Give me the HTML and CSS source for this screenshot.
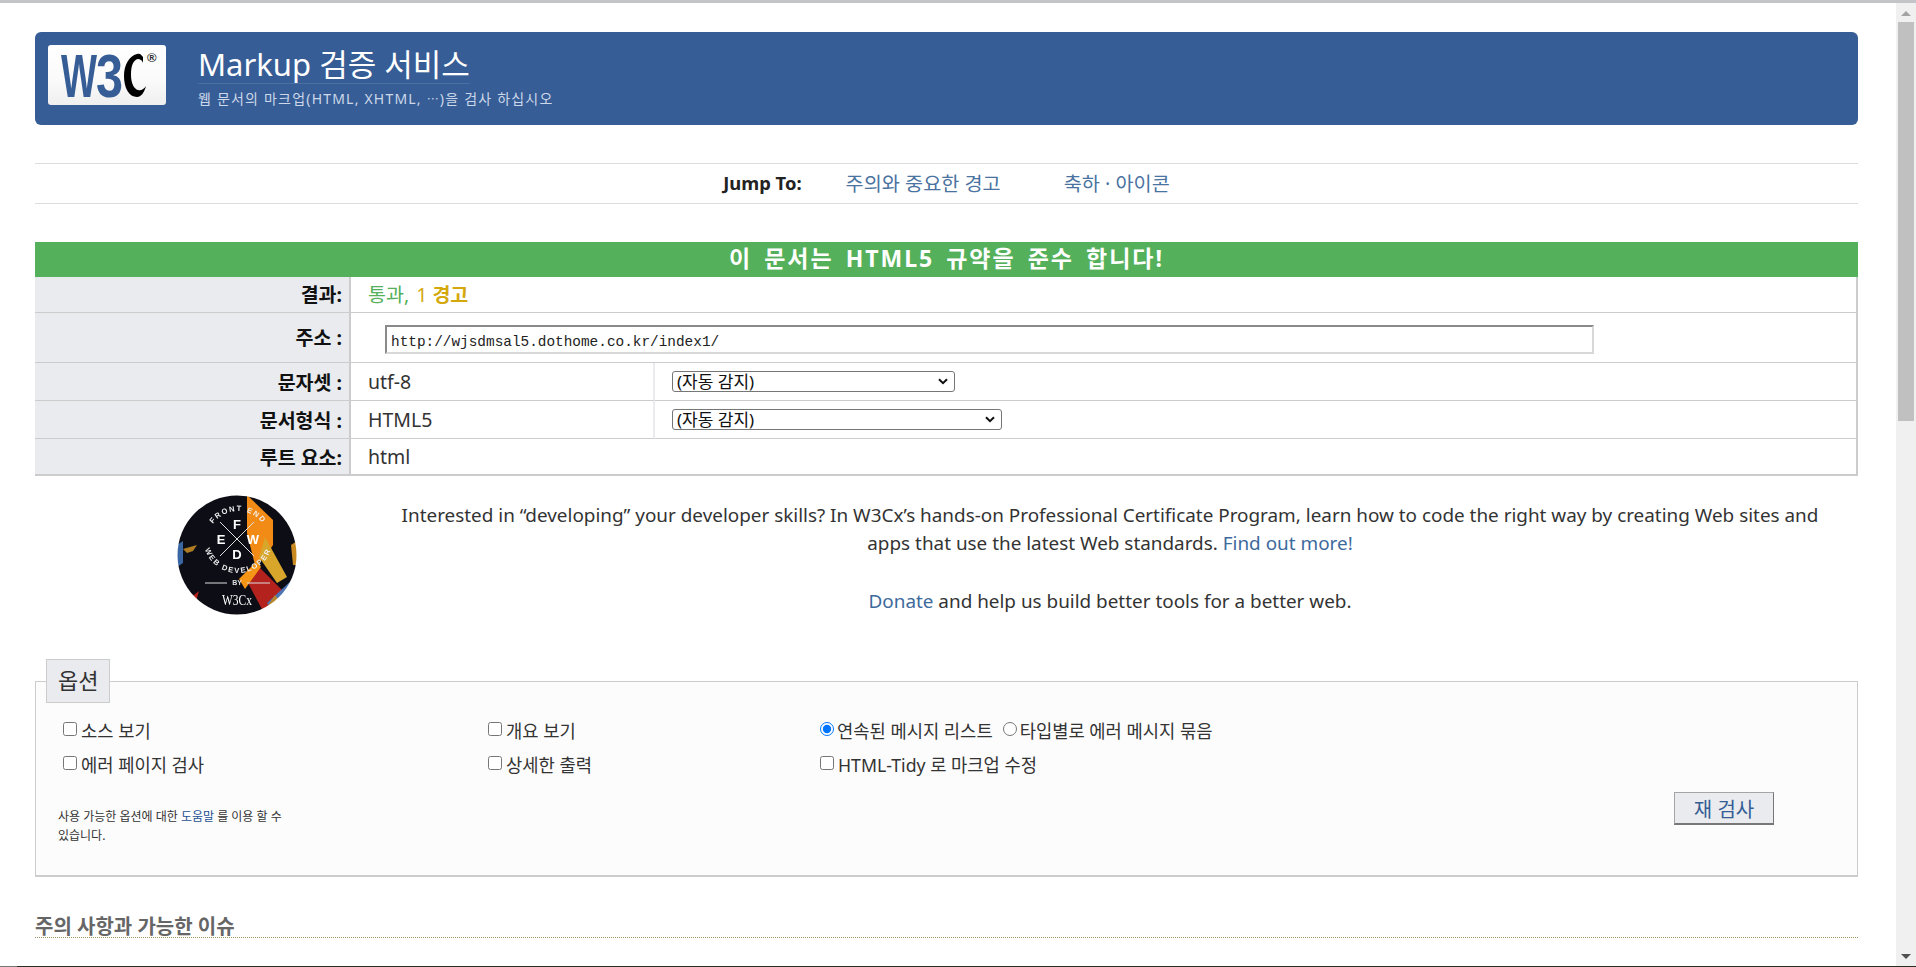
FILE: index.html
```html
<!DOCTYPE html>
<html lang="ko">
<head>
<meta charset="utf-8">
<title>Markup 검증 서비스</title>
<link rel="stylesheet" href="styles.css">
</head>
<body>
<div class="topline"></div>
<div class="window">
  <main class="page">
    <header class="banner">
      <svg class="logo" viewBox="0 0 118 60" width="118" height="60" aria-label="W3C">
        <defs>
          <linearGradient id="lg" x1="0" y1="0" x2="0" y2="1"><stop offset="0" stop-color="#fff"/><stop offset="0.6" stop-color="#fafafa"/><stop offset="1" stop-color="#efefef"/></linearGradient>
        </defs>
        <rect width="118" height="60" rx="3" fill="url(#lg)"/>
        <text x="13" y="52" class="logo-letter" textLength="36" lengthAdjust="spacingAndGlyphs">W</text>
        <text x="48" y="52" class="logo-letter" textLength="27" lengthAdjust="spacingAndGlyphs">3</text>
        <path d="M95 12 C93 9 91 8 89 9 C81 11 76 20 76 31 C76 43 81 52 89 52 C93 52 96 48 98 41 C96 44 93 46 90 45 C86 44 83 38 83 30 C83 21 85 15 90 14 C92 14 94 15 95 18 Z" fill="#000"/>
        <text x="99" y="17" class="logo-reg">®</text>
      </svg>
      <div class="banner-text">
        <h1 class="title"><a class="title-link" href="#">Markup 검증 서비스</a></h1>
        <p class="subtitle">웹 문서의 마크업(HTML, XHTML, <span class="ell">…</span>)을 검사 하십시오</p>
      </div>
    </header>

    <nav class="jump">
      <strong class="jump-label">Jump To:</strong>
      <a class="jump-link" href="#">주의와 중요한 경고</a>
      <a class="jump-link" href="#">축하 · 아이콘</a>
    </nav>

    <h2 class="status">이 문서는 HTML5 규약을 준수 합니다!</h2>
    <table class="result">
      <colgroup><col class="c-head"><col class="c-val"><col></colgroup>
      <tr class="r-result">
        <th>결과:</th>
        <td colspan="2"><span class="pass">통과, </span><span class="warn">1 <b>경고</b></span></td>
      </tr>
      <tr class="r-addr">
        <th class="th-addr">주소 :</th>
        <td colspan="2"><input class="uri" type="text" value="http://wjsdmsal5.dothome.co.kr/index1/"></td>
      </tr>
      <tr class="r-sel">
        <th>문자셋 :</th>
        <td class="val">utf-8</td>
        <td class="sel-cell">
          <div class="sel sel-a" role="combobox" aria-expanded="false"><span class="sel-text">(자동 감지)</span><svg class="chev" viewBox="0 0 10 7" width="10" height="7" aria-hidden="true"><path d="M1 1.2 L5 5.2 L9 1.2" fill="none" stroke="#111" stroke-width="2"/></svg></div>
        </td>
      </tr>
      <tr class="r-sel">
        <th>문서형식 :</th>
        <td class="val">HTML5</td>
        <td class="sel-cell">
          <div class="sel sel-b" role="combobox" aria-expanded="false"><span class="sel-text">(자동 감지)</span><svg class="chev" viewBox="0 0 10 7" width="10" height="7" aria-hidden="true"><path d="M1 1.2 L5 5.2 L9 1.2" fill="none" stroke="#111" stroke-width="2"/></svg></div>
        </td>
      </tr>
      <tr class="r-root">
        <th>루트 요소:</th>
        <td colspan="2">html</td>
      </tr>
    </table>

    <section class="promo">
      <svg class="badge" viewBox="0 0 120 120" width="120" height="120" aria-label="Front End Web Developer by W3Cx">
        <defs>
          <clipPath id="cc"><circle cx="60" cy="60" r="59.5"/></clipPath>
          <path id="arc-top" d="M30 47 A31 31 0 0 1 92 47"/>
          <path id="arc-bot" d="M26 43 A35 35 0 0 0 96 43"/>
          <filter id="soft"><feGaussianBlur stdDeviation="0.3"/></filter>
        </defs>
        <g clip-path="url(#cc)" filter="url(#soft)">
          <rect width="120" height="120" fill="#0c1018"/>
          <polygon points="70,0 96,25 96,50 88,62 78,70 70,38" fill="#f28a12"/>
          <polygon points="88,42 110,82 100,88 82,62" fill="#d8a62c"/>
          <polygon points="78,68 108,98 88,120 70,86" fill="#b3201f"/>
          <polygon points="62,84 80,66 84,72 68,94" fill="#f59512"/>
          <polygon points="0,50 6,46 6,68 0,72" fill="#3a66a4"/>
          <polygon points="6,54 20,50 16,56 10,58" fill="#b07b24"/>
          <polygon points="22,96 18,110 12,104" fill="#b3201f"/>
          <polygon points="114,50 120,46 120,70 116,70" fill="#c98a20"/>
          <polygon points="90,108 116,84 117,88 94,114" fill="#4d74b4"/>
          <polygon points="86,118 98,100 104,108 92,120" fill="#b9882c"/>
          <text class="arc-text"><textPath href="#arc-top" startOffset="50%">FRONT END</textPath></text>
          <text class="arc-text"><textPath href="#arc-bot" startOffset="50%">WEB DEVELOPER</textPath></text>
          <line x1="43" y1="27" x2="77" y2="61" class="badge-line"/>
          <line x1="77" y1="27" x2="43" y2="61" class="badge-line"/>
          <text x="60" y="34" class="badge-letter">F</text>
          <text x="44" y="49" class="badge-letter">E</text>
          <text x="76" y="49" class="badge-letter">W</text>
          <text x="60" y="64" class="badge-letter">D</text>
          <line x1="28" y1="88" x2="50" y2="88" class="badge-line"/>
          <line x1="70" y1="88" x2="93" y2="88" class="badge-line"/>
          <text x="60" y="90" class="badge-by">BY</text>
          <text x="60" y="110" class="badge-w3cx" textLength="30" lengthAdjust="spacingAndGlyphs">W3Cx</text>
        </g>
      </svg>
      <div class="promo-text">
        <p class="promo-p">Interested in “developing” your developer skills? In W3Cx’s hands-on Professional Certificate Program, learn how to code the right way by creating Web sites and apps that use the latest Web standards. <a class="link" href="#">Find out more!</a></p>
        <p class="promo-p promo-donate"><a class="link" href="#">Donate</a> and help us build better tools for a better web.</p>
      </div>
    </section>

    <fieldset class="options">
      <legend class="legend">옵션</legend>
      <div class="opt-grid">
        <label class="opt"><input class="cb" type="checkbox">소스 보기</label>
        <label class="opt"><input class="cb" type="checkbox">개요 보기</label>
        <div class="opt">
          <label class="opt-inline"><input class="rb" type="radio" name="g" checked>연속된 메시지 리스트</label>
          <label class="opt-inline"><input class="rb" type="radio" name="g">타입별로 에러 메시지 묶음</label>
        </div>
        <label class="opt"><input class="cb" type="checkbox">에러 페이지 검사</label>
        <label class="opt"><input class="cb" type="checkbox">상세한 출력</label>
        <label class="opt"><input class="cb" type="checkbox">HTML-Tidy 로 마크업 수정</label>
      </div>
      <div class="opt-foot">
        <p class="help">사용 가능한 옵션에 대한 <a class="help-link" href="#">도움말</a> 를 이용 할 수 있습니다.</p>
        <button class="revalidate" type="button">재 검사</button>
      </div>
    </fieldset>

    <h2 class="section-title">주의 사항과 가능한 이슈</h2>
  </main>
  <aside class="scrollbar">
    <span class="arrow-up"></span>
    <span class="thumb"></span>
    <span class="arrow-down"></span>
  </aside>
</div>
<div class="bottomline"></div>
</body>
</html>
```
FILE: styles.css
```css
* { box-sizing: border-box; }
html, body { margin: 0; height: 100%; overflow: hidden; }
body {
  display: flex;
  flex-direction: column;
  height: 967px;
  background: #fff;
  color: #222;
  font-family: "Noto Sans", "Noto Sans CJK KR", sans-serif;
}
.topline { height: 3px; background: #c2c4c8; flex: none; }
.bottomline { height: 1px; flex: none; background: linear-gradient(to right, #777 17px, #2c2c22 17px); }
.window { flex: 1; display: flex; min-height: 0; }
.page { flex: 1; min-width: 0; padding: 29px 38px 0 35px; overflow: hidden; }

/* scrollbar */
.scrollbar { width: 20px; flex: none; background: #f0f0f0; display: flex; flex-direction: column; align-items: center; }
.thumb { width: 16px; height: 399px; background: #c0c0c0; margin-top: 6px; }
.arrow-up, .arrow-down { width: 0; height: 0; border-left: 5px solid transparent; border-right: 5px solid transparent; }
.arrow-up { border-bottom: 5px solid #a3a3a3; margin-top: 8px; }
.arrow-down { border-top: 5px solid #505050; margin-top: auto; margin-bottom: 7px; }

/* banner */
.banner { height: 93px; background: #365d95; border-radius: 6px; padding: 13px 13px 0; display: flex; }
.logo { flex: none; display: block; }
.logo-letter { font-family: "Liberation Sans", sans-serif; font-weight: 700; font-size: 62px; fill: #365d95; }
.logo-reg { font-family: "Liberation Sans", sans-serif; font-weight: 700; font-size: 13px; fill: #333; }
.banner-text { margin-left: 32px; }
.title { margin: 0; font-size: 31px; font-weight: 400; line-height: 38px; }
.title-link { color: #fff; text-decoration: none; display: inline-block; border-bottom: 1px solid #4a6fa3; }
.subtitle { margin: 6px 0 0; font-size: 14px; line-height: 18px; letter-spacing: 1.2px; color: #ccd8ea; }
.ell { font-family: "Noto Sans CJK JP", sans-serif; font-size: 12px; }

/* jump */
.jump { margin-top: 38px; height: 41px; padding-bottom: 2px; border-top: 1px solid #ddd; border-bottom: 1px solid #ddd; display: flex; justify-content: center; align-items: center; gap: 63px; font-size: 19.7px; }
.jump-label { font-weight: 700; font-size: 18.4px; color: #222; margin-right: -19px; }
.jump-link { color: #4a739f; text-decoration: none; }

/* status */
.status { margin: 38px 0 0; height: 35px; background: #54b05a; color: #fff; font-size: 23px; line-height: 33px; font-weight: 700; text-align: center; letter-spacing: 2px; word-spacing: 4px; }

/* table */
.result { width: 100%; border-collapse: separate; border-spacing: 0; table-layout: fixed; border-right: 2px solid #ccc; border-bottom: 2px solid #ccc; font-size: 19.5px; }
.c-head { width: 316px; }
.c-val { width: 304px; }
.result th { background: #e9ebee; text-align: right; padding: 0 7px 0 0; border-right: 2px solid #ccc; border-bottom: 1px solid #ccc; font-size: 19.5px; font-weight: 700; color: #111; }
.result td { padding: 0 0 0 17px; border-bottom: 1px solid #ccc; color: #333; }
.result tr:last-child th, .result tr:last-child td { border-bottom: 0; }
.r-result { height: 36px; }
.r-result th, .r-result td { padding-bottom: 2px; }
.r-addr { height: 50px; }
.r-sel { height: 38px; }
.r-root { height: 35px; }
.th-addr { vertical-align: top; padding-top: 9px !important; }
.pass { color: #54b05a; }
.warn { color: #d4a80c; margin-left: 2px; }
.warn b { font-weight: 700; }
.uri { display: block; width: 1209px; height: 29px; margin: 3px 0 0 17px; padding: 5px 4px 0; border: 2px solid; border-color: #8a8a8a #d8d8d8 #d8d8d8 #8a8a8a; font-family: "Liberation Mono", monospace; font-size: 14.4px; color: #222; background: #fff; }
.val { border-right: 2px solid #e9ebee; }
.sel-cell { vertical-align: middle; }
.sel { display: flex; align-items: center; justify-content: space-between; height: 21px; padding: 0 6px 0 4px; margin-bottom: 1px; font-size: 17px; line-height: 19px; color: #111; background: #fff; border: 1px solid #767676; border-radius: 3px; }
.sel-a { width: 283px; }
.sel-b { width: 330px; }
.sel-text { white-space: nowrap; }
.chev { display: block; flex: none; }

/* promo */
.promo { display: flex; padding-top: 19px; height: 183px; }
.badge { flex: none; margin-left: 142px; display: block; }
.promo-text { flex: 1; margin-left: 93px; margin-right: 28px; padding-top: 6px; }
.promo-p { margin: 0; font-size: 18.9px; line-height: 28px; color: #333; text-align: center; }
.promo-donate { margin-top: 30px; }
.link { color: #3d6a9c; text-decoration: none; }

/* options */
.options { margin: 0; padding: 0 21px 0 11px; height: 218px; min-width: 0; border: 2px solid #ccc; border-width: 1px 1px 2px 1px; background: #fcfcfc; }
.legend { margin: 0 0 0 -1px; padding: 0 11px; height: 44px; line-height: 40px; background: #e9ebee; border: 1px solid #ccc; font-size: 22px; color: #333; }
.opt-grid { display: grid; grid-template-columns: 425px 332px 1fr; grid-auto-rows: 34px; margin-top: 10px; padding-left: 16px; }
.opt { font-size: 17.7px; color: #333; display: flex; align-items: center; white-space: nowrap; }
.opt-inline { display: inline-flex; align-items: center; margin-right: 10px; }
.cb { margin: 0 4px 2px 0; width: 14px; height: 14px; flex: none; }
.rb { margin: 0 3px 2px 0; width: 14px; height: 14px; flex: none; }
.opt-foot { display: flex; justify-content: space-between; align-items: flex-start; margin-top: 11px; }
.help { margin: 15px 0 0 11px; width: 250px; font-size: 12px; line-height: 19px; color: #333; word-break: keep-all; }
.help-link { color: #1c4f92; text-decoration: none; }
.revalidate { margin: 0 62px 0 0; width: 100px; height: 33px; padding: 0; background: #e9ebee; color: #365d95; border: 1px solid #a5a5a5; border-right-color: #777; border-bottom: 2px solid #777; font-family: inherit; font-size: 20px; }

/* section */
.section-title { margin: 40px 0 0; height: 21px; font-size: 20px; line-height: 20px; font-weight: 700; color: #666; border-bottom: 1px dotted #9a9660; }

/* badge */
.arc-text { font-family: "Liberation Sans", sans-serif; font-weight: 700; font-size: 7.5px; letter-spacing: 1.6px; fill: #eee; text-anchor: middle; }
.badge-line { stroke: #ddd; stroke-width: 1; }
.badge-letter { font-family: "Liberation Sans", sans-serif; font-weight: 700; font-size: 13px; fill: #fff; text-anchor: middle; }
.badge-by { font-family: "Liberation Sans", sans-serif; font-weight: 700; font-size: 7px; fill: #ddd; text-anchor: middle; }
.badge-w3cx { font-family: "Liberation Serif", serif; font-size: 14px; fill: #fff; text-anchor: middle; }
```
